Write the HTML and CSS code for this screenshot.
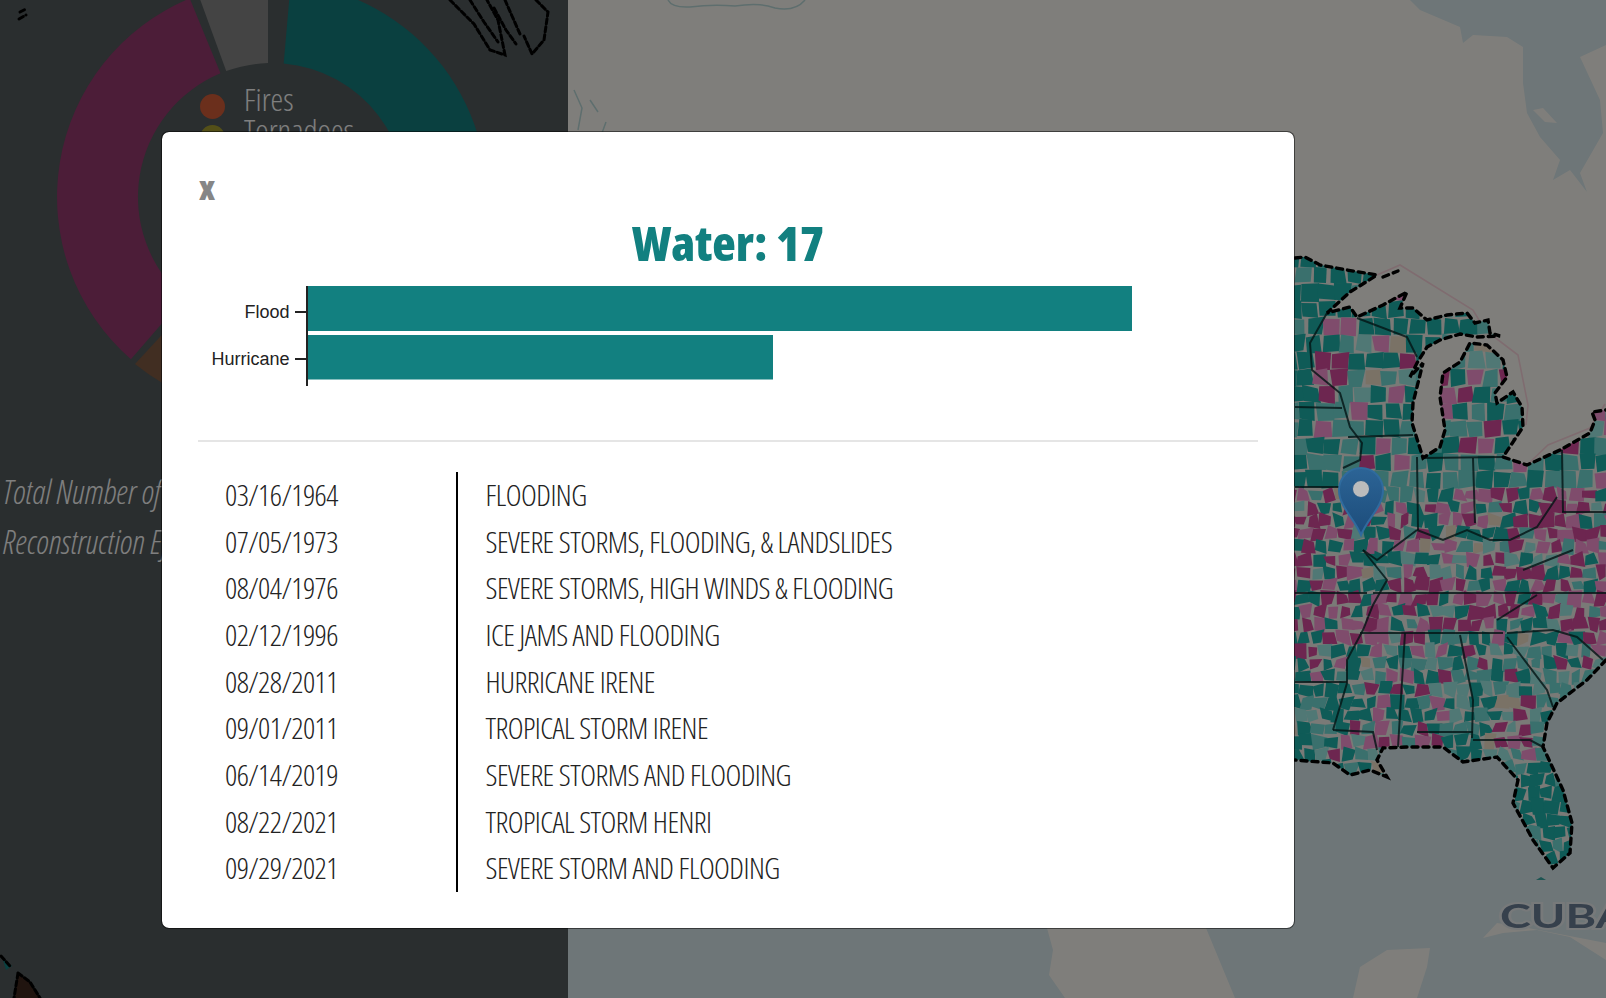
FILE: index.html
```html
<!DOCTYPE html>
<html lang="en">
<head>
    <meta charset="UTF-8">
    <meta name="viewport" content="width=device-width, initial-scale=1.0">
    <title>Disaster declarations</title>
    <link rel="stylesheet" href="styles.css">
</head>
<body>

<div class="page">

    <div class="side">
        <svg class="side-coast" viewBox="0 0 568 998">
            <path class="coast coast-fine" d="M19 19 l7 -4 M20 12 l6 -3"/>
            <path class="coast coast-fine" d="M450 0 L474 24 L490 50 L505 55 L498 20 L487 0"/>
            <path class="coast coast-fine" d="M536 0 L548 12 L544 40 L532 54 L524 36"/>
            <path class="coast coast-fine" d="M470 0 L484 22 L498 42 M505 0 L512 16 L520 34 M494 8 L506 30 L516 44"/>
            <path class="isle" d="M2 957 L12 966 L6 970 Z"/>
            <path class="isle-big" d="M18 973 L30 982 L40 998 L14 998 Z"/>
            <path class="coast coast-fine" d="M18 973 L30 982 L40 998 M18 973 L14 998 M1 956 L10 966"/>
        </svg>

        <div class="donut-wrap">
            <svg class="donut" viewBox="-215 -215 430 430">
                <path fill="#148080" d="M11.7 -133.5 L18.7 -214.2 A215 215 0 0 1 211.7 37.3 L132 23.3 A134 134 0 0 0 11.7 -133.5 Z"/>
                <path fill="#888888" d="M-4 -134 L-4 -215 L-73.5 -202 L-45.8 -126 A134 134 0 0 1 -4 -134 Z"/>
                <path fill="#983a70" d="M-51.5 -123.7 L-82.3 -198.6 A215 215 0 0 0 -141.1 162.2 L-88 101.1 A134 134 0 0 1 -51.5 -123.7 Z"/>
                <path fill="#825c44" d="M-81.2 106.6 L-137 167 A215 215 0 0 0 -20 214 L-12 133 A134 134 0 0 1 -81.2 106.6 Z"/>
            </svg>
            <ul class="legend">
                <li class="legend-row"><span class="dot dot-fire"></span>Fires</li>
                <li class="legend-row"><span class="dot dot-tornado"></span>Tornadoes</li>
            </ul>
        </div>

        <p class="caption">Total Number of Disasters &amp;<br>Reconstruction Efforts</p>
    </div>

    <div class="map">
        <svg id="usmap" class="map-svg" viewBox="568 0 1038 998">
            <defs>
                <clipPath id="landClip">
                    <polygon id="landShape" points="1000,258 1305,257 1320,265 1347,270 1377,275 1350,292 1327,313 1350,307 1357,317 1383,305 1407,292 1400,308 1413,308 1427,320 1447,315 1467,313 1475,323 1488,320 1490,333 1500,336 1477,337 1460,334 1440,340 1427,347 1417,363 1410,377 1423,363 1413,403 1412,423 1423,458 1440,447 1445,430 1440,397 1443,373 1460,362 1470,343 1487,345 1503,360 1507,377 1495,393 1497,403 1513,392 1522,407 1523,427 1503,457 1527,465 1560,450 1590,433 1595,420 1592,412 1606,410 1606,660 1587,680 1557,703 1547,723 1543,747 1563,790 1572,823 1570,853 1553,868 1533,840 1513,803 1518,780 1497,757 1463,762 1443,747 1407,747 1383,748 1377,760 1387,777 1370,770 1350,775 1333,763 1295,760 1000,760"/>
                </clipPath>
            </defs>

            <rect class="ground" x="568" y="0" width="1038" height="998"/>

            <polygon class="water" points="568,700 1606,650 1606,998 568,998"/>
            <polygon class="water" points="1410,0 1420,10 1460,27 1463,43 1473,35 1507,37 1523,47 1523,83 1527,113 1540,137 1560,160 1553,180 1570,170 1587,192 1580,173 1603,133 1600,100 1580,57 1606,45 1606,0"/>
            <polygon class="ground" points="1533,110 1543,108 1557,123 1545,122"/>
            <path class="shore" d="M668 0 Q672 8 690 7 Q712 4 735 6 Q760 2 775 8 Q795 12 805 0"/>
            <path class="shore" d="M574 90 L582 108 L578 130 M590 100 L598 112 M606 122 L602 133"/>

            <polygon class="ground" points="1000,700 1240,700 1206,928 1235,998 1065,998 1049,975 1053,950 1047,928"/>
            <polygon class="ground" points="1353,998 1360,967 1387,950 1430,948 1427,967 1417,998"/>
            <polygon class="ground" points="1483,938 1497,923 1523,927 1606,943 1606,960 1570,937 1537,930 1503,933"/>
            <polygon class="cay" points="1536,880 1541,877 1546,880"/>

            <polyline class="lake-line" points="1377,275 1400,265 1473,310 1485,330 1518,355 1528,405 1526,425"/>
            <polyline class="lake-line" points="1527,465 1548,445 1590,428 1605,404"/>

            <g id="counties" clip-path="url(#landClip)">
                <rect class="land-base" x="1000" y="250" width="606" height="630"/>
            </g>

            <g class="states">
                <polyline points="1327,313 1310,343 1312,370 1340,393 1350,427 1362,443 1360,460 1343,468"/>
                <polyline points="1295,407 1342,408"/>
                <polyline points="1295,487 1340,487"/>
                <polyline points="1348,437 1413,435"/>
                <polyline points="1417,457 1418,530"/>
                <polyline points="1473,458 1475,523"/>
                <polyline points="1423,458 1503,457"/>
                <polyline points="1562,450 1563,512"/>
                <polyline points="1417,530 1443,540 1467,530 1490,540 1510,540 1537,527 1557,497"/>
                <polyline points="1357,318 1407,337 1417,357"/>
                <polyline points="1295,593 1367,593"/>
                <polyline points="1373,593 1606,593"/>
                <polyline points="1363,550 1387,580 1373,605 1363,630 1347,660 1347,683 1333,730"/>
                <polyline points="1360,633 1503,633"/>
                <polyline points="1405,633 1398,747"/>
                <polyline points="1460,635 1473,700 1472,738"/>
                <polyline points="1417,732 1473,732"/>
                <polyline points="1473,740 1530,740 1543,747"/>
                <polyline points="1295,682 1347,682"/>
                <polyline points="1333,730 1373,732 1377,750"/>
                <polyline points="1507,633 1553,630 1577,637 1603,660"/>
                <polyline points="1507,637 1547,690 1553,707"/>
                <polyline points="1497,620 1537,595"/>
                <polyline points="1523,570 1573,550"/>
                <polyline points="1562,512 1606,512"/>
                <polyline points="1363,550 1377,560 1417,530"/>
            </g>

            <polyline class="coast" points="1295,258 1305,257 1320,265 1347,270 1377,275 1350,292 1327,313 1350,307 1357,317 1383,305 1407,292 1400,308 1413,308 1427,320 1447,315 1467,313 1475,323 1488,320 1490,333 1500,336 1477,337 1460,334 1440,340 1427,347 1417,363 1410,377 1423,363 1413,403 1412,423 1423,458 1440,447 1445,430 1440,397 1443,373 1460,362 1470,343 1487,345 1503,360 1507,377 1495,393 1497,403 1513,392 1522,407 1523,427 1503,457 1527,465 1560,450 1590,433 1595,420 1592,412 1606,410"/>
            <polyline class="coast" points="1606,660 1587,680 1557,703 1547,723 1543,747 1563,790 1572,823 1570,853 1553,868 1533,840 1513,803 1518,780 1497,757 1463,762 1443,747 1407,747 1383,748 1377,760 1387,777 1370,770 1350,775 1333,763 1295,760"/>
            <path class="coast" d="M1383 277 L1398 271"/>

            <text class="country" x="1500" y="928" textLength="128" lengthAdjust="spacingAndGlyphs">CUBA</text>
        </svg>
    </div>

    <svg class="pin" viewBox="0 0 46 70">
        <defs>
            <linearGradient id="pinFill" x1="0" y1="0" x2="0" y2="1">
                <stop offset="0" stop-color="#2c6496"/>
                <stop offset="1" stop-color="#1c4c7a"/>
            </linearGradient>
        </defs>
        <path class="pin-body" d="M23 68 C17 52 1 40 1 23 A22 22 0 0 1 45 23 C45 40 29 52 23 68 Z"/>
        <circle class="pin-hole" cx="23" cy="22" r="8.5"/>
    </svg>

    <div class="backdrop">
        <div class="modal">
            <div class="modal-close"><span class="close-x">x</span></div>
            <h2 class="modal-title">Water: 17</h2>

            <svg class="bars" viewBox="0 0 1060 100">
                <rect class="bar" x="110" y="0" width="824" height="45"/>
                <rect class="bar" x="110" y="49" width="465" height="44.5"/>
                <path class="axis" d="M109 0 V100 M97 26 H109 M97 73 H109"/>
                <text class="bar-label" x="91.5" y="32">Flood</text>
                <text class="bar-label" x="91.5" y="79">Hurricane</text>
            </svg>

            <hr class="divider">

            <table class="events">
                <tr><td class="event-date">03/16/1964</td><td class="event-name">FLOODING</td></tr>
                <tr><td class="event-date">07/05/1973</td><td class="event-name">SEVERE STORMS, FLOODING, &amp; LANDSLIDES</td></tr>
                <tr><td class="event-date">08/04/1976</td><td class="event-name">SEVERE STORMS, HIGH WINDS &amp; FLOODING</td></tr>
                <tr><td class="event-date">02/12/1996</td><td class="event-name">ICE JAMS AND FLOODING</td></tr>
                <tr><td class="event-date">08/28/2011</td><td class="event-name">HURRICANE IRENE</td></tr>
                <tr><td class="event-date">09/01/2011</td><td class="event-name">TROPICAL STORM IRENE</td></tr>
                <tr><td class="event-date">06/14/2019</td><td class="event-name">SEVERE STORMS AND FLOODING</td></tr>
                <tr><td class="event-date">08/22/2021</td><td class="event-name">TROPICAL STORM HENRI</td></tr>
                <tr><td class="event-date">09/29/2021</td><td class="event-name">SEVERE STORM AND FLOODING</td></tr>
            </table>
        </div>
    </div>

</div>

<script src="map.js"></script>
</body>
</html>
```

FILE: styles.css
```css
* {
    box-sizing: border-box;
}

body {
    margin: 0;
    font-family: "Open Sans", "Liberation Sans", sans-serif;
    background-color: #545c5e;
    overflow: hidden;
}

.page {
    position: relative;
    display: flex;
    width: 1606px;
    height: 998px;
    overflow: hidden;
}

/* left panel */
.side {
    position: relative;
    width: 568px;
    height: 100%;
    flex: none;
    background-color: #545c5e;
    overflow: hidden;
}

.side-coast {
    position: absolute;
    top: 0;
    left: 0;
    width: 568px;
    height: 998px;
}

.donut-wrap {
    position: relative;
    width: 430px;
    height: 430px;
    margin: -18px 0 0 57px;
}

.donut {
    display: block;
    width: 430px;
    height: 430px;
}

.legend {
    position: absolute;
    top: 101px;
    left: 143px;
    margin: 0;
    padding: 0;
    list-style: none;
}

.legend-row {
    display: flex;
    align-items: center;
    gap: 19px;
    height: 31px;
    font-size: 32px;
    font-weight: 300;
    font-stretch: 75%;
    color: #fff;
}

.dot {
    width: 25px;
    height: 25px;
    border-radius: 50%;
    transform: translateY(8px);
}

.dot-fire {
    background-color: #d65e38;
}

.dot-tornado {
    background-color: #a8a030;
}

.caption {
    position: relative;
    margin: 55px 0 0 3px;
    width: 560px;
    font-size: 33px;
    line-height: 50px;
    font-style: italic;
    font-weight: 300;
    font-stretch: 75%;
    color: #fff;
    white-space: nowrap;
}

/* map */
.map {
    flex: 1;
    position: relative;
}

.map-svg {
    display: block;
    width: 1038px;
    height: 998px;
    filter: blur(0.5px);
}

.ground {
    fill: #fffdf6;
}

.water {
    fill: #dcecf0;
}

.cay {
    fill: #3aa8a4;
}

.shore {
    fill: none;
    stroke: #bcdcdc;
    stroke-width: 1.5;
}

.lake-line {
    fill: none;
    stroke: #ffd8e0;
    stroke-width: 1.6;
}

.land-base {
    fill: #f4f4ee;
}

.states polyline {
    fill: none;
    stroke: #062828;
    stroke-width: 2;
    opacity: 0.8;
}

.coast {
    fill: none;
    stroke: #000;
    stroke-width: 3.4;
    stroke-linecap: round;
    stroke-dasharray: 6 5;
}

.coast-fine {
    stroke-width: 3;
    stroke-dasharray: 5 3;
}

.isle {
    fill: #148080;
}

.isle-big {
    fill: #40281f;
}

.country {
    font-family: Lato, "Liberation Sans", sans-serif;
    font-size: 32px;
    font-weight: 700;
    fill: #6c8098;
    stroke: #eef2f4;
    stroke-width: 4px;
    paint-order: stroke;
}

.pin {
    position: absolute;
    left: 1338px;
    top: 467px;
    width: 46px;
    height: 70px;
    z-index: 11;
}

.pin-body {
    fill: url(#pinFill);
    stroke: #2f6b9e;
    stroke-width: 2;
}

.pin-hole {
    fill: #bcbcbc;
    stroke: #2a5a88;
    stroke-width: 1;
}

/* modal */
.backdrop {
    position: absolute;
    top: 0;
    left: 0;
    width: 100%;
    height: 100%;
    padding: 131px 0 0 161px;
    background-color: rgba(0, 0, 0, 0.5);
}

.modal {
    position: relative;
    z-index: 12;
    width: 1134px;
    height: 798px;
    padding: 36px;
    background-color: #fff;
    background-clip: padding-box;
    border: 1px solid rgba(0, 0, 0, 0.5);
    border-radius: 8px;
}

.modal-close {
    height: 44px;
}

.close-x {
    display: inline-block;
    margin: 3px 0 0 1px;
    font-size: 34px;
    line-height: 32px;
    font-weight: 800;
    font-stretch: 75%;
    color: #868686;
}

.modal-title {
    margin: 0 0 14px;
    font-size: 48.5px;
    line-height: 60px;
    font-weight: 800;
    font-stretch: 75%;
    text-align: center;
    color: #128080;
}

.bars {
    display: block;
    width: 1060px;
    height: 100px;
}

.bar {
    fill: #128080;
}

.axis {
    fill: none;
    stroke: #222;
    stroke-width: 2;
}

.bar-label {
    font-family: "Liberation Sans", Arial, sans-serif;
    font-size: 18px;
    text-anchor: end;
    fill: #222;
}

.divider {
    height: 2px;
    margin: 54px 0 30px;
    border: none;
    background-color: #e5e5e5;
}

.events {
    border-collapse: collapse;
    font-size: 30px;
    letter-spacing: -0.55px;
    font-weight: 300;
    font-stretch: 75%;
    color: #222;
}

.events tr {
    height: 46.67px;
}

.events td {
    padding: 0 0 1.5px;
}

.event-date {
    width: 259px;
    padding-left: 27px !important;
    border-right: 2px solid #000;
}

.event-name {
    padding-left: 27.5px !important;
    white-space: nowrap;
}
```

FILE: map.js
```js
// county mosaic, seeded so it draws the same each time
var seed = 20211;
function rnd() {
    seed = (seed * 16807) % 2147483647;
    return seed / 2147483647;
}

var colors = ['#1eb6ae', '#74e0da', '#a0f0ea', '#da4ca0', '#fe98d8', '#f4e4cc'];

function weightsFor(x, y) {
    if (y > 760 && x > 1480) return [0.72, 0.22, 0.03, 0.02, 0, 0.01];
    if (y < 315 && x < 1350) return [0.94, 0.06, 0, 0, 0, 0];
    if (y < 350 && x > 1420) return [0.3, 0.4, 0.15, 0.02, 0.03, 0.1];
    if (y < 480) return [0.42, 0.3, 0.08, 0.07, 0.09, 0.04];
    if (y < 640) return [0.3, 0.08, 0.05, 0.36, 0.19, 0.02];
    if (y > 680 && x < 1345) return [0.6, 0.27, 0.09, 0.02, 0.01, 0.01];
    if (x < 1440) return [0.36, 0.2, 0.1, 0.14, 0.18, 0.02];
    return [0.42, 0.3, 0.15, 0.08, 0.03, 0.02];
}

function pick(w) {
    var r = rnd(), sum = 0;
    for (var i = 0; i < w.length; i++) {
        sum += w[i];
        if (r < sum) return colors[i];
    }
    return colors[0];
}

var group = document.getElementById('counties');
var NS = 'http://www.w3.org/2000/svg';

var rowY = 250;
while (rowY < 880) {
    var step = rowY < 480 ? 17 : 13;
    var j = rowY < 480 ? 2 : 3;
    for (var x = 1285 - rnd() * step; x < 1612; x += step) {
        var g = 0.6;
        var pts = [
            [x + g, rowY + g],
            [x + step - g, rowY + g],
            [x + step - g, rowY + step - g],
            [x + g, rowY + step - g]
        ].map(function (p) {
            return (p[0] + (rnd() - 0.5) * j * 2).toFixed(1) + ',' + (p[1] + (rnd() - 0.5) * j * 2).toFixed(1);
        });
        var poly = document.createElementNS(NS, 'polygon');
        poly.setAttribute('points', pts.join(' '));
        poly.setAttribute('fill', pick(weightsFor(x, rowY)));
        group.appendChild(poly);
    }
    rowY += step;
}
```
